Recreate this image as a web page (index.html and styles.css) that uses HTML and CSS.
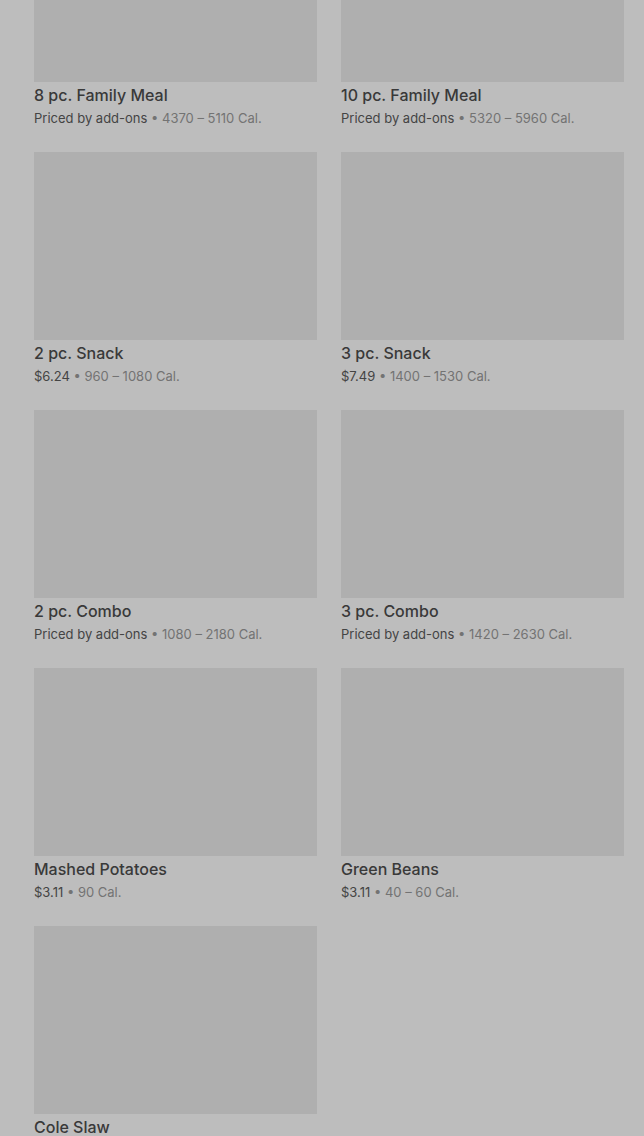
FILE: index.html
```html
<!DOCTYPE html>
<html lang="en">
<head>
    <meta charset="UTF-8">
    <meta name="viewport" content="width=device-width, initial-scale=1.0">
    <title>Menu</title>
    <link rel="stylesheet" href="styles.css">
</head>
<body>
    <div class="menu-grid">
        <div class="item">
            <div class="item-photo"></div>
            <div class="item-name">8 pc. Family Meal</div>
            <div class="item-info">Priced by add-ons <span class="cal">• 4370 – 5110 Cal.</span></div>
        </div>
        <div class="item">
            <div class="item-photo"></div>
            <div class="item-name">10 pc. Family Meal</div>
            <div class="item-info">Priced by add-ons <span class="cal">• 5320 – 5960 Cal.</span></div>
        </div>
        <div class="item">
            <div class="item-photo"></div>
            <div class="item-name">2 pc. Snack</div>
            <div class="item-info">$6.24 <span class="cal">• 960 – 1080 Cal.</span></div>
        </div>
        <div class="item">
            <div class="item-photo"></div>
            <div class="item-name">3 pc. Snack</div>
            <div class="item-info">$7.49 <span class="cal">• 1400 – 1530 Cal.</span></div>
        </div>
        <div class="item">
            <div class="item-photo"></div>
            <div class="item-name">2 pc. Combo</div>
            <div class="item-info">Priced by add-ons <span class="cal">• 1080 – 2180 Cal.</span></div>
        </div>
        <div class="item">
            <div class="item-photo"></div>
            <div class="item-name">3 pc. Combo</div>
            <div class="item-info">Priced by add-ons <span class="cal">• 1420 – 2630 Cal.</span></div>
        </div>
        <div class="item">
            <div class="item-photo"></div>
            <div class="item-name">Mashed Potatoes</div>
            <div class="item-info">$3.11 <span class="cal">• 90 Cal.</span></div>
        </div>
        <div class="item">
            <div class="item-photo"></div>
            <div class="item-name">Green Beans</div>
            <div class="item-info">$3.11 <span class="cal">• 40 – 60 Cal.</span></div>
        </div>
        <div class="item">
            <div class="item-photo"></div>
            <div class="item-name">Cole Slaw</div>
        </div>
    </div>
</body>
</html>
```

FILE: styles.css
```css
body {
    margin: 0;
    padding: 0;
    background-color: #bdbdbd;
    font-family: Inter, "Noto Sans", sans-serif;
    overflow: hidden;
}

.menu-grid {
    display: grid;
    grid-template-columns: 283px 283px;
    column-gap: 24px;
    row-gap: 23px;
    padding: 0 20px 0 34px;
    margin-top: -106px;
}

.item-photo {
    height: 188px;
    background-color: #afafaf;
}

.item-name {
    margin-top: 1px;
    font-size: 16px;
    font-weight: 500;
    line-height: 24px;
    color: #393939;
}

.item-info {
    font-size: 13px;
    line-height: 22px;
    color: #444;
}

.cal {
    color: #737373;
}
```
